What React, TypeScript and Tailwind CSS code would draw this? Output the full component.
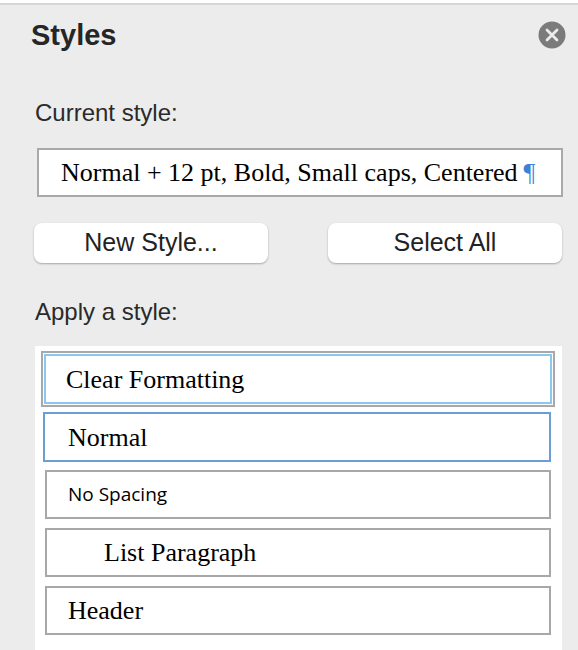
export default function App() {
  const serif = { fontFamily: '"Liberation Serif", "Times New Roman", serif' };
  return (
    <div className="w-[578px] h-[650px] overflow-hidden bg-[#ececec] border-t-[2px] border-[#d6d6d6] mt-[3px]" style={{ fontFamily: '"Helvetica Neue", "Liberation Sans", Arial, sans-serif' }}>
      <div className="flex items-center justify-between pl-[31px] pr-[12px] pt-[2px] h-[58px]">
        <div className="text-[29px] font-semibold text-[#262626] leading-none">Styles</div>
        <svg width="28" height="28" viewBox="0 0 28 28">
          <circle cx="14" cy="14" r="13.5" fill="#7b7b7b" />
          <path d="M9 9 L19 19 M19 9 L9 19" stroke="#ececec" strokeWidth="2.8" strokeLinecap="round" />
        </svg>
      </div>
      <div className="pl-[35px] pt-[38px] text-[24px] text-[#2a2a2a] leading-none">Current style:</div>
      <div className="ml-[37px] mr-[15px] mt-[23px] h-[49px] bg-white border-[2px] border-[#a9a9a9] flex items-center pl-[22px] text-[26px] text-black whitespace-nowrap overflow-hidden" style={serif}>
        Normal + 12 pt, Bold, Small caps, Centered <span className="text-[#3b82d6] ml-[6px]">¶</span>
      </div>
      <div className="flex justify-between ml-[34px] mr-[16px] mt-[26px]">
        <button className="w-[234px] h-[40px] bg-white rounded-[8px] shadow-[0_1px_2px_rgba(0,0,0,0.3)] text-[25px] text-[#222]">New Style...</button>
        <button className="w-[234px] h-[40px] bg-white rounded-[8px] shadow-[0_1px_2px_rgba(0,0,0,0.3)] text-[25px] text-[#222]">Select All</button>
      </div>
      <div className="pl-[35px] pt-[37px] text-[24px] text-[#2a2a2a] leading-none">Apply a style:</div>
      <div className="ml-[35px] mr-[16px] mt-[22px] h-[320px] bg-white pt-[5px] flex flex-col" style={serif}>
        <div className="ml-[6px] mr-[7px] h-[56px] shrink-0 border-[2px] border-[#a8a8a8] p-[1px]">
          <div className="h-full border-[2px] border-[#8ac8ef] flex items-center pl-[20px] text-[26px] text-black">Clear Formatting</div>
        </div>
        <div className="ml-[8px] mr-[11px] mt-[5px] h-[50px] shrink-0 border-[2px] border-[#6a9fd6] flex items-center pl-[23px] text-[26px] text-black">Normal</div>
        <div className="ml-[10px] mr-[11px] mt-[8px] h-[49px] shrink-0 border-[2px] border-[#a8a8a8] flex items-center pl-[21px] text-[19px] text-black" style={{ fontFamily: '"Open Sans", "Noto Sans", sans-serif' }}>No Spacing</div>
        <div className="ml-[10px] mr-[11px] mt-[9px] h-[49px] shrink-0 border-[2px] border-[#a8a8a8] flex items-center pl-[57px] text-[26px] text-black">List Paragraph</div>
        <div className="ml-[10px] mr-[11px] mt-[9px] h-[49px] shrink-0 border-[2px] border-[#a8a8a8] flex items-center pl-[21px] text-[26px] text-black">Header</div>
      </div>
    </div>
  );
}
